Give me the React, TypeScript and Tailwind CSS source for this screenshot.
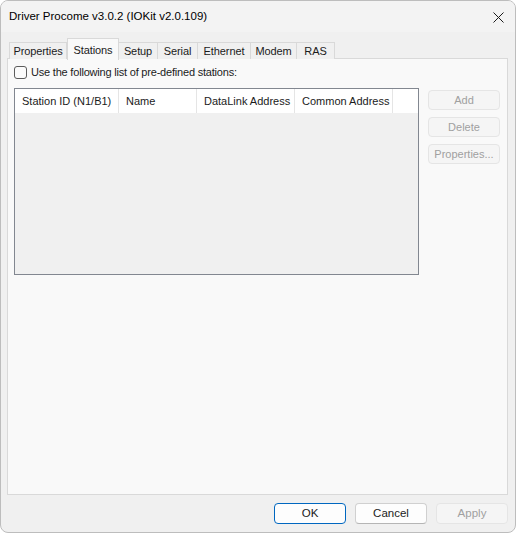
const tabs = [
  { label: "Properties", w: "w-[58px]" },
  { label: "Stations", w: "w-[52px]", active: true },
  { label: "Setup", w: "w-[40px]" },
  { label: "Serial", w: "w-[41px]" },
  { label: "Ethernet", w: "w-[54px]" },
  { label: "Modem", w: "w-[47px]" },
  { label: "RAS", w: "w-[39px]" },
];

const columns = [
  { label: "Station ID (N1/B1)", w: "w-[104px]" },
  { label: "Name", w: "w-[78px]" },
  { label: "DataLink Address", w: "w-[98px]" },
  { label: "Common Address", w: "w-[98px]" },
];

function SideButton({ label }: { label: string }) {
  return (
    <button
      disabled
      className="flex h-[20px] w-[72px] items-center justify-center rounded-[4px] border border-[#e5e5e5] bg-[#f5f5f5] text-[11px] text-[#a0a0a0]"
    >
      {label}
    </button>
  );
}

function DialogButton({
  label,
  primary,
  disabled,
}: {
  label: string;
  primary?: boolean;
  disabled?: boolean;
}) {
  let cls = "border-[#d0d0d0] border-b-[#b5b5b5] bg-[#fdfdfd] text-[#1b1b1b]";
  if (primary) cls = "border-[#0067c0] bg-[#fdfdfd] text-[#1b1b1b]";
  if (disabled) cls = "border-[#e5e5e5] bg-[#f5f5f5] text-[#a0a0a0]";
  return (
    <button
      disabled={disabled}
      className={`flex h-[21px] w-[72px] items-center justify-center rounded-[4px] border text-[11.5px] ${cls}`}
    >
      {label}
    </button>
  );
}

export default function App() {
  return (
    <div className="flex h-[533px] w-[516px] flex-col overflow-hidden rounded-[8px] border border-[#bdbdbd] bg-[#f0f0f0] font-['Liberation_Sans',Arial,sans-serif] text-[#1b1b1b]">
      {/* title bar */}
      <div className="flex h-[31px] shrink-0 items-center justify-between bg-[#f3f3f3] pl-[8px] pr-[11px]">
        <span className="text-[11.5px] text-black">Driver Procome v3.0.2 (IOKit v2.0.109)</span>
        <svg width="11" height="11" viewBox="0 0 11 11" className="mt-[1px]">
          <path d="M0.5 0.5L10.5 10.5M10.5 0.5L0.5 10.5" stroke="#1b1b1b" strokeWidth="1" />
        </svg>
      </div>

      <div className="flex flex-1 flex-col px-[6px] pt-[6px]">
        {/* tab strip */}
        <div className="relative z-10 flex h-[21px] items-end pl-[2px]">
          {tabs.map((t) =>
            t.active ? (
              <div
                key={t.label}
                className={`${t.w} flex h-[22px] -mb-px items-start justify-center border border-b-0 border-[#d9d9d9] bg-[#f9f9f9] pt-[3px] text-[11px] tracking-[-0.1px]`}
              >
                {t.label}
              </div>
            ) : (
              <div
                key={t.label}
                className={`${t.w} -ml-px first:ml-0 flex h-[17px] items-center justify-center border border-b-0 border-[#d9d9d9] bg-[#f0f0f0] text-[11px] tracking-[-0.1px]`}
              >
                {t.label}
              </div>
            )
          )}
        </div>

        {/* tab page */}
        <div className="-mt-px flex h-[437px] w-[501px] flex-col border border-[#d9d9d9] bg-[#f9f9f9] pl-[6px] pt-[7px]">
          <label className="flex h-[13px] items-center gap-[4px] text-[11px] tracking-[-0.2px]">
            <span className="h-[13px] w-[13px] rounded-[3px] border border-[#5c5c5c] bg-[#fbfbfb]" />
            Use the following list of pre-defined stations:
          </label>

          <div className="mt-[9px] flex">
            <div className="flex h-[187px] w-[405px] flex-col border border-[#828790] bg-[#f0f0f0]">
              <div className="flex h-[24px] bg-white">
                {columns.map((c) => (
                  <div
                    key={c.label}
                    className={`${c.w} flex items-center border-r border-[#e5e5e5] pl-[7px] text-[11px] whitespace-nowrap`}
                  >
                    {c.label}
                  </div>
                ))}
              </div>
            </div>

            <div className="ml-[9px] mt-[2px] flex flex-col gap-[7px]">
              <SideButton label="Add" />
              <SideButton label="Delete" />
              <SideButton label="Properties..." />
            </div>
          </div>
        </div>

        {/* dialog buttons */}
        <div className="mt-[8px] flex justify-end gap-[9px] pr-[1px]">
          <DialogButton label="OK" primary />
          <DialogButton label="Cancel" />
          <DialogButton label="Apply" disabled />
        </div>
      </div>
    </div>
  );
}
